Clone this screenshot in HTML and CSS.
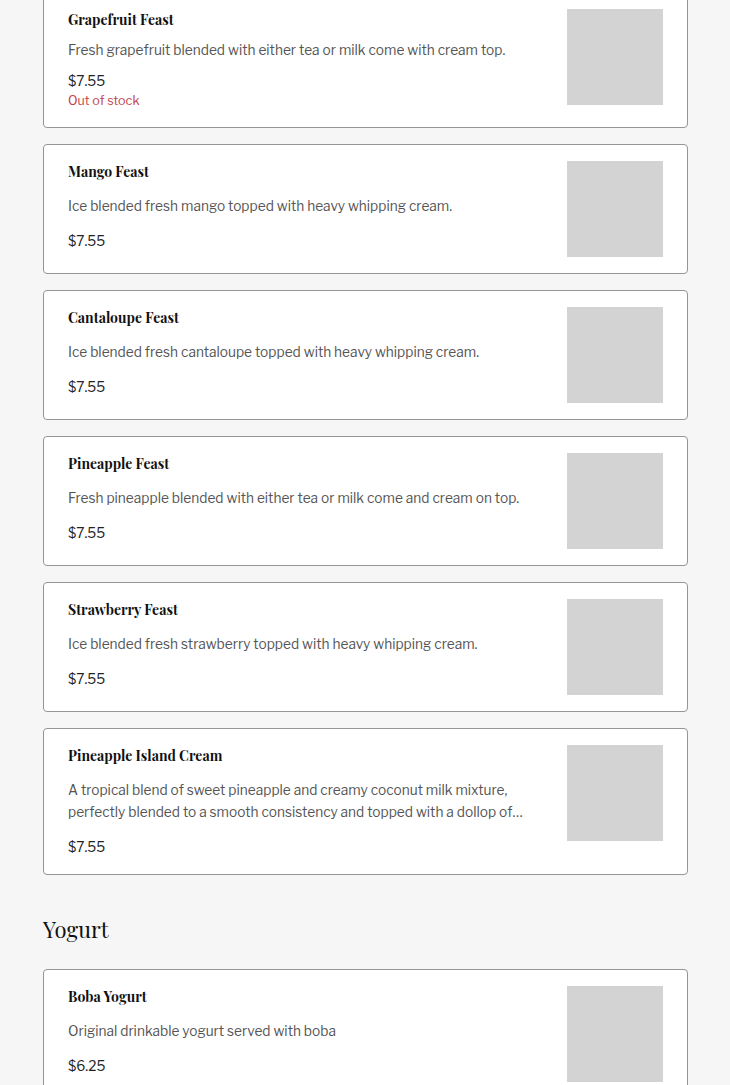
FILE: index.html
```html
<!DOCTYPE html>
<html lang="en">
<head>
<meta charset="utf-8">
<title>Menu</title>
<link rel="stylesheet" href="styles.css">
</head>
<body>
<main class="menu">
  <section class="section section--first">
    <div class="items">
      <article class="item item--oos">
        <div class="item-info">
          <h3 class="item-title">Grapefruit Feast</h3>
          <p class="item-desc">Fresh grapefruit blended with either tea or milk come with cream top.</p>
          <p class="item-price">$7.55</p>
          <p class="item-stock">Out of stock</p>
        </div>
        <div class="item-img"></div>
      </article>
      <article class="item">
        <div class="item-info">
          <h3 class="item-title">Mango Feast</h3>
          <p class="item-desc">Ice blended fresh mango topped with heavy whipping cream.</p>
          <p class="item-price">$7.55</p>
        </div>
        <div class="item-img"></div>
      </article>
      <article class="item">
        <div class="item-info">
          <h3 class="item-title">Cantaloupe Feast</h3>
          <p class="item-desc">Ice blended fresh cantaloupe topped with heavy whipping cream.</p>
          <p class="item-price">$7.55</p>
        </div>
        <div class="item-img"></div>
      </article>
      <article class="item">
        <div class="item-info">
          <h3 class="item-title">Pineapple Feast</h3>
          <p class="item-desc">Fresh pineapple blended with either tea or milk come and cream on top.</p>
          <p class="item-price">$7.55</p>
        </div>
        <div class="item-img"></div>
      </article>
      <article class="item">
        <div class="item-info">
          <h3 class="item-title">Strawberry Feast</h3>
          <p class="item-desc">Ice blended fresh strawberry topped with heavy whipping cream.</p>
          <p class="item-price">$7.55</p>
        </div>
        <div class="item-img"></div>
      </article>
      <article class="item">
        <div class="item-info">
          <h3 class="item-title">Pineapple Island Cream</h3>
          <p class="item-desc">A tropical blend of sweet pineapple and creamy coconut milk mixture, perfectly blended to a smooth consistency and topped with a dollop of whipped cream for a refreshing island treat.</p>
          <p class="item-price">$7.55</p>
        </div>
        <div class="item-img"></div>
      </article>
    </div>
  </section>
  <section class="section">
    <h2 class="section-title">Yogurt</h2>
    <div class="items">
      <article class="item">
        <div class="item-info">
          <h3 class="item-title">Boba Yogurt</h3>
          <p class="item-desc">Original drinkable yogurt served with boba</p>
          <p class="item-price">$6.25</p>
        </div>
        <div class="item-img"></div>
      </article>
    </div>
  </section>
</main>
</body>
</html>
```
FILE: styles.css
```css
* { box-sizing: border-box; }
html, body { margin: 0; padding: 0; }
body {
  background: #f6f6f6;
  font-family: "Libre Franklin", "Noto Sans", "Liberation Sans", sans-serif;
  color: #222;
}
.menu {
  padding: 0 42px 0 43px;
  margin-top: -8px;
}
.section { display: flex; flex-direction: column; }
.section-title {
  margin: 40px 0 26px;
  font-family: "Playfair Display", "Liberation Serif", "DejaVu Serif", serif;
  font-weight: 400;
  font-size: 22px;
  line-height: 28px;
  color: #111;
}
.items { display: flex; flex-direction: column; gap: 16px; }
.item {
  display: flex;
  gap: 24px;
  align-items: flex-start;
  background: #fff;
  border: 1px solid #959595;
  border-radius: 4px;
  padding: 16px 24px 16px 24px;
}
.item-info { flex: 1; min-width: 0; display: flex; flex-direction: column; }
.item-title {
  margin: 1px 0 0;
  font-family: "Playfair Display", "Liberation Serif", "DejaVu Serif", serif;
  font-weight: 700;
  font-size: 14px;
  line-height: 20px;
  color: #111;
}
.item-desc {
  margin: 13px 0 0;
  font-size: 13.7px;
  line-height: 22px;
  color: #555;
  display: -webkit-box;
  -webkit-line-clamp: 2;
  -webkit-box-orient: vertical;
  overflow: hidden;
}
.item-price {
  margin: 13px 0 0;
  font-size: 13.7px;
  line-height: 22px;
  color: #222;
}
.item--oos .item-desc { margin-top: 9px; }
.item--oos .item-price { margin-top: 9px; }
.item-stock {
  margin: 0;
  font-size: 12.5px;
  line-height: 18px;
  color: #c4424a;
}
.item--oos .item-info { padding-bottom: 1px; }
.item-img {
  flex: none;
  width: 96px;
  height: 96px;
  background: #d3d3d3;
}
```
